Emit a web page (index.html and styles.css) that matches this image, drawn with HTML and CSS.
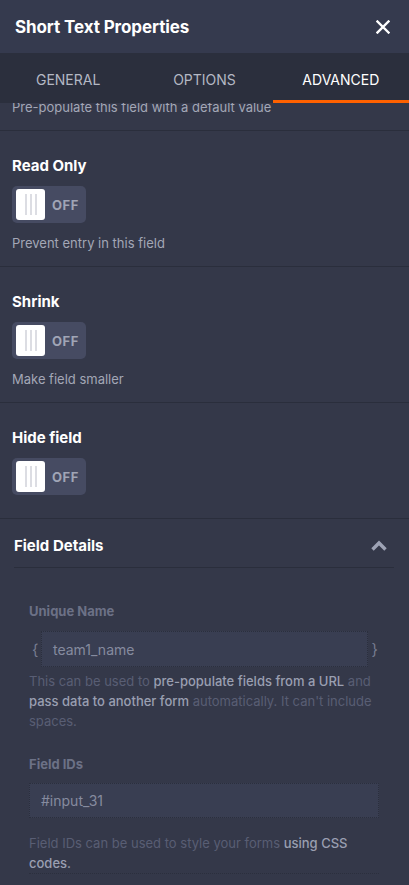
FILE: index.html
```html
<!DOCTYPE html>
<html lang="en">
  <head>
    <meta charset="UTF-8" />
    <meta name="viewport" content="width=device-width, initial-scale=1.0" />
    <title>Short Text Properties</title>
    <link rel="stylesheet" href="styles.css">
  </head>
  <body>
    <div class="props">
      <div class="props-header">
        <h1>Short Text Properties</h1>
        <button class="close" aria-label="Close">
          <svg width="14" height="14" viewBox="0 0 14 14">
            <path d="M1.5 1.5 L12.5 12.5 M12.5 1.5 L1.5 12.5" stroke="#fff" stroke-width="2.4" stroke-linecap="square" />
          </svg>
        </button>
      </div>

      <div class="tabs">
        <div class="tab">GENERAL</div>
        <div class="tab">OPTIONS</div>
        <div class="tab active">ADVANCED</div>
      </div>

      <div class="panel">
        <div class="prop first">
          <div class="prop-desc">Pre-populate this field with a default value</div>
        </div>

        <div class="prop">
          <div class="prop-title">Read Only</div>
          <div class="toggle"><span class="knob"></span><span class="toggle-label">OFF</span></div>
          <div class="prop-desc">Prevent entry in this field</div>
        </div>

        <div class="prop">
          <div class="prop-title">Shrink</div>
          <div class="toggle"><span class="knob"></span><span class="toggle-label">OFF</span></div>
          <div class="prop-desc">Make field smaller</div>
        </div>

        <div class="prop">
          <div class="prop-title">Hide field</div>
          <div class="toggle"><span class="knob"></span><span class="toggle-label">OFF</span></div>
        </div>

        <div class="details">
          <div class="details-header">
            <span>Field Details</span>
            <svg width="18" height="12" viewBox="0 0 18 12">
              <path d="M2.5 9.5 L9 3 L15.5 9.5" fill="none" stroke="#9ea3b5" stroke-width="3.4" />
            </svg>
          </div>

          <div class="details-body">
            <div class="field-label">Unique Name</div>
            <div class="name-row">
              <span class="brace">{</span>
              <div class="text-box">team1_name</div>
              <span class="brace">}</span>
            </div>
            <p class="help">This can be used to <b>pre-populate fields from a URL</b> and <b>pass data to another form</b> automatically. It can't include spaces.</p>

            <div class="field-label ids">Field IDs</div>
            <div class="text-box wide">#input_31</div>
            <p class="help last">Field IDs can be used to style your forms <b>using CSS codes.</b></p>
          </div>
        </div>
      </div>
    </div>
  </body>
</html>
```

FILE: styles.css
```css
body {
  margin: 0;
  font-family: Inter, "Noto Sans", sans-serif;
  background-color: #343849;
  color: #fff;
}
.props {
  width: 409px;
  height: 885px;
  overflow: hidden;
  display: flex;
  flex-direction: column;
}
.props-header {
  height: 53px;
  display: flex;
  align-items: center;
  justify-content: space-between;
  padding: 0 19px 0 15px;
  background-color: #353a4e;
  flex-shrink: 0;
}
.props-header h1 {
  margin: 0;
  font-size: 17px;
  font-weight: 700;
  letter-spacing: -0.1px;
}
.close {
  background: none;
  border: 0;
  padding: 0;
  display: flex;
}
.tabs {
  height: 50px;
  display: grid;
  grid-template-columns: 1fr 1fr 1fr;
  background-color: #2b2f3d;
  flex-shrink: 0;
}
.tab {
  display: flex;
  align-items: center;
  justify-content: center;
  font-size: 14px;
  color: #b4b8c4;
  box-sizing: border-box;
  padding-top: 3px;
}
.tab.active {
  color: #fff;
  border-bottom: 3px solid #ff6100;
  padding-top: 6px;
}
.panel {
  flex: 1;
  overflow: hidden;
}
.prop {
  display: flex;
  flex-direction: column;
  align-items: flex-start;
  gap: 11px;
  padding: 26px 12px 14px 12px;
  border-bottom: 1px solid #2a2e3c;
}
.prop.first {
  padding-top: 0;
  margin-top: -5px;
}
.prop-title {
  font-size: 15px;
  font-weight: 700;
  line-height: 18px;
}
.prop-desc {
  font-size: 13px;
  line-height: 18px;
  color: #a3a7b6;
}
.toggle {
  width: 74px;
  height: 37px;
  box-sizing: border-box;
  padding: 3px 4px;
  border-radius: 5px;
  background-color: #464b62;
  display: flex;
  align-items: center;
  gap: 7px;
}
.toggle:last-child {
  margin-bottom: 9px;
}
.knob {
  width: 29px;
  height: 31px;
  border-radius: 3px;
  background:
    linear-gradient(#dcdde3, #dcdde3) 9px 5px / 2px 21px no-repeat,
    linear-gradient(#dcdde3, #dcdde3) 14px 5px / 2px 21px no-repeat,
    linear-gradient(#dcdde3, #dcdde3) 19px 5px / 2px 21px no-repeat,
    #fff;
}
.toggle-label {
  font-size: 13px;
  font-weight: 700;
  letter-spacing: 0.6px;
  color: #a0a5b6;
}
.details {
  padding: 0 15px 0 14px;
}
.details-header {
  display: flex;
  align-items: center;
  justify-content: space-between;
  padding: 18px 6px 12px 0;
  border-bottom: 1px solid #2a2e3c;
  font-size: 15px;
  font-weight: 700;
  line-height: 18px;
}
.details-body {
  padding: 35px 15px 0 15px;
}
.field-label {
  font-size: 13px;
  font-weight: 700;
  line-height: 16px;
  color: #6c7186;
}
.field-label.ids {
  margin-top: 25px;
}
.name-row {
  display: flex;
  align-items: center;
  margin-top: 12px;
}
.brace {
  box-sizing: border-box;
  width: 12px;
  font-size: 15px;
  color: #777c90;
}
.name-row .brace:first-child {
  padding-left: 3px;
}
.name-row .brace:last-child {
  width: 11px;
  text-align: right;
  padding-right: 1px;
}
.text-box {
  flex: 1;
  height: 36px;
  box-sizing: border-box;
  padding: 0 11px;
  display: flex;
  align-items: center;
  background-color: #393e52;
  border: 1px dotted #2b2f3d;
  font-size: 14px;
  color: #868b9f;
}
.text-box.wide {
  margin-top: 11px;
  height: 35px;
}
.help {
  margin: 4px 0 0 0;
  font-size: 13px;
  line-height: 20px;
  color: #595e74;
}
.help b {
  font-weight: 500;
  color: #9a9fb1;
}
.help.last {
  margin-top: 15px;
  border-bottom: 1px dotted #2b2f3d;
}
```
